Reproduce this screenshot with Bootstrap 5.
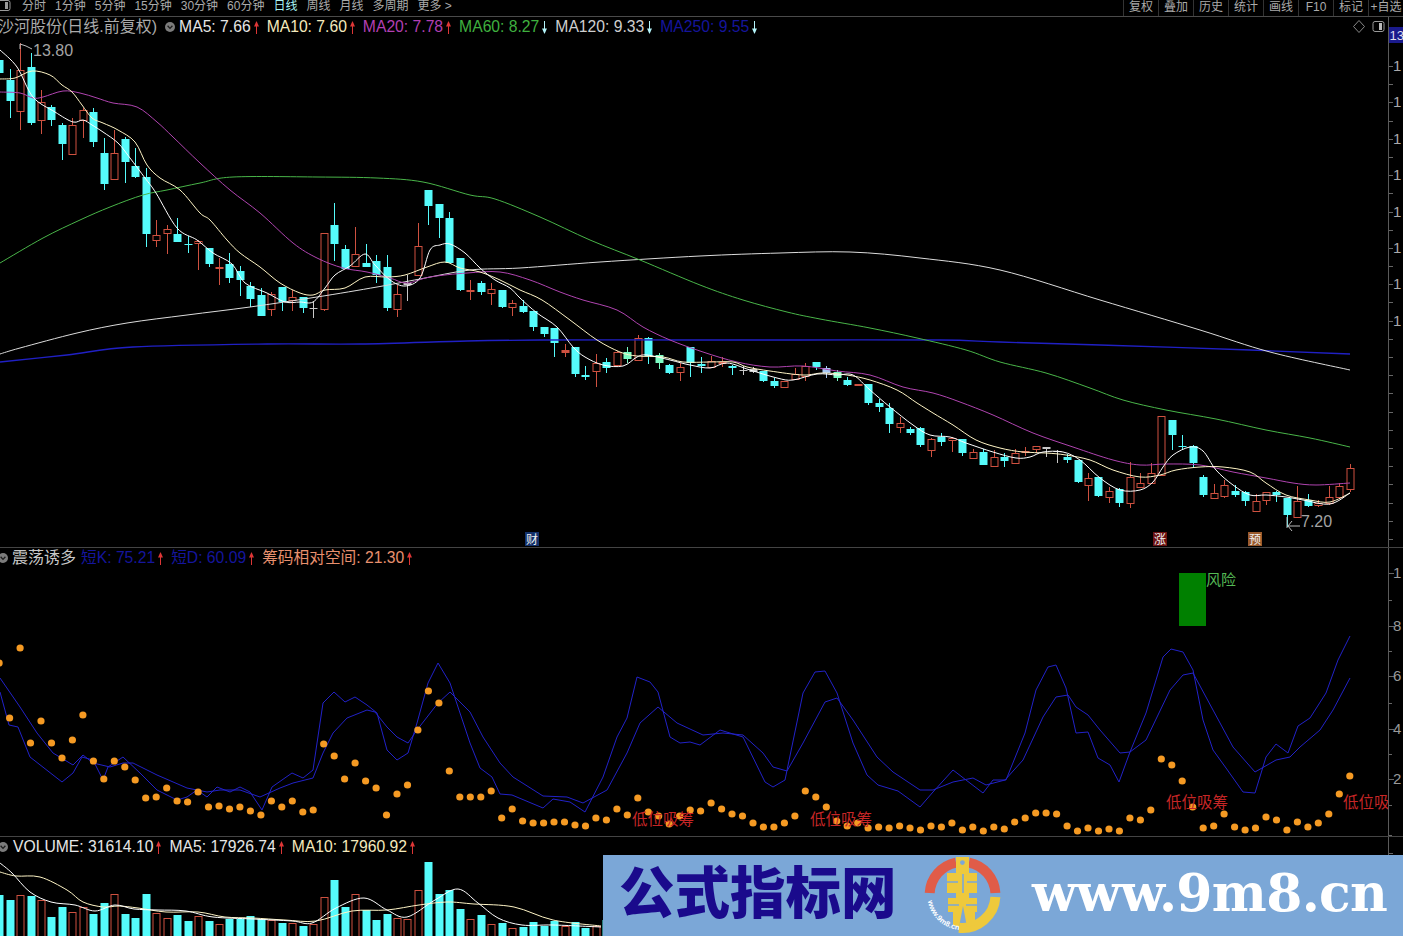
<!DOCTYPE html>
<html lang="zh-CN">
<head>
  <meta charset="UTF-8">
  <meta name="viewport" content="width=device-width, initial-scale=1.0">
  <title>沙河股份 日线</title>
  <link href="https://cdn.jsdelivr.net/npm/bootstrap@5.3.0/dist/css/bootstrap.min.css" rel="stylesheet">
  <style>
    body {
      background: #000;
      height: 936px;
      overflow: hidden;
      font-family: "Liberation Sans", "Noto Sans CJK SC", sans-serif;
    }
    .toolbar {
      height: 17px;
      border-bottom: 1px solid #4a4a4a;
      font-size: 12px;
      color: #aaa;
      line-height: 12px;
      overflow: hidden;
    }
    .period-list {
      margin-left: 22px;
      gap: 9px;
    }
    .period-on { color: #a8f4f4; }
    .tool-list button {
      width: 35px;
      height: 16px;
      padding: 0 0 3px;
      border: 0;
      border-left: 1px solid #333;
      background: none;
      color: #aaa;
      font-size: 12px;
      line-height: 12px;
      text-align: center;
      display: block;
    }
    .pane { border-bottom: 1px solid #444; }
    .pane-main { height: 531px; }
    .pane-osc { height: 289px; }
    .pane-vol { height: 99px; border-bottom: 0; }
    .plot { width: 1388px; }
    .plot svg, .scale svg { display: block; }
    .scale {
      width: 15px;
      border-left: 1px solid #5a5a5a;
      overflow: hidden;
    }
    .legend {
      z-index: 2;
      font-size: 15.7px;
      line-height: 20px;
      white-space: nowrap;
    }
    .leg-item { margin-right: 7px; }
    .leg-item svg { width: 7px; height: 15px; margin-left: 2px; }
    .fold-dot { width: 10px; height: 10px; flex: none; }
    .fold-left { margin-left: -2px; }
    .stock-name { font-size: 16px; margin-left: -2px; color: #aaa; }
    .osc-name { font-size: 16px; color: #c8c8c8; margin-right: 5px; }
    .vol-first { padding-left: 5px; }
    .c-white { color: #e6e6e6; }
    .c-yellow { color: #f4e9bc; }
    .c-purple { color: #b23fb2; }
    .c-green { color: #3fb03f; }
    .c-grey { color: #cfcfcf; }
    .c-blue { color: #15159c; }
    .c-salmon { color: #e8906e; }
    .arrow-up { color: #dd3636; }
    .arrow-down { color: #b4f4fa; }
    .site-banner {
      z-index: 3;
      left: 603px;
      top: 855px;
      width: 800px;
      height: 81px;
      background: #7ba7d7;
    }
    .site-name {
      width: 301px;
      padding-left: 16px;
      margin-top: -14px;
      color: #1a0a8c;
      font-family: "Noto Sans CJK SC", sans-serif;
      font-weight: 900;
      font-size: 55.5px;
      line-height: 70px;
      white-space: nowrap;
    }
    .site-logo { width: 78px; height: 78px; margin-left: 20px; flex: none; }
    .site-url {
      margin-left: 30px;
      margin-top: -6px;
      color: #fff;
      font-family: "DejaVu Serif", serif;
      font-weight: 700;
      font-size: 52px;
      line-height: 70px;
      letter-spacing: -0.7px;
      white-space: nowrap;
    }
  </style>
</head>
<body class="position-relative">
  <svg width="0" height="0" class="position-absolute">
    <symbol id="up" viewBox="0 0 7 15"><path d="M3.5 2V14" stroke="currentColor" fill="none"/><path d="M1 6.5 3.5 1 6 6.5Z" fill="currentColor"/></symbol>
    <symbol id="down" viewBox="0 0 7 15"><path d="M3.5 1V13" stroke="currentColor" fill="none"/><path d="M1 8.5 3.5 14 6 8.5Z" fill="currentColor"/></symbol>
    <symbol id="fold" viewBox="0 0 10 10"><circle cx="5" cy="5" r="5" fill="#7c7c7c"/><path d="M2.6 3.8 5 6.4 7.4 3.8" fill="none" stroke="#1c1c1c" stroke-width="1.3"/></symbol>
  </svg>

  <nav class="toolbar d-flex position-relative">
    <svg class="position-absolute top-0 start-0" width="12" height="12"><rect x="-2" y="0.5" width="12" height="10" rx="2" fill="none" stroke="#999"/><rect x="5" y="2" width="3" height="7" fill="#999"/></svg>
    <div class="period-list d-flex">
      <span>分时</span><span>1分钟</span><span>5分钟</span><span>15分钟</span><span>30分钟</span><span>60分钟</span>
      <span class="period-on">日线</span><span>周线</span><span>月线</span><span>多周期</span><span>更多 &gt;</span>
    </div>
    <div class="tool-list d-flex ms-auto">
      <button type="button">复权</button><button type="button">叠加</button><button type="button">历史</button><button type="button">统计</button>
      <button type="button">画线</button><button type="button">F10</button><button type="button">标记</button><button type="button">+自选</button>
    </div>
  </nav>

  <section class="pane pane-main d-flex">
    <div class="plot position-relative">
      <div class="legend position-absolute top-0 start-0 d-flex align-items-center">
        <span class="stock-name">沙河股份(日线.前复权)</span>
        <svg class="fold-dot ms-2 me-1"><use href="#fold"/></svg>
        <span class="leg-item c-white d-flex align-items-center">MA5: 7.66<svg class="arrow-up"><use href="#up"/></svg></span>
        <span class="leg-item c-yellow d-flex align-items-center">MA10: 7.60<svg class="arrow-up"><use href="#up"/></svg></span>
        <span class="leg-item c-purple d-flex align-items-center">MA20: 7.78<svg class="arrow-up"><use href="#up"/></svg></span>
        <span class="leg-item c-green d-flex align-items-center">MA60: 8.27<svg class="arrow-down"><use href="#down"/></svg></span>
        <span class="leg-item c-grey d-flex align-items-center">MA120: 9.33<svg class="arrow-down"><use href="#down"/></svg></span>
        <span class="leg-item c-blue d-flex align-items-center">MA250: 9.55<svg class="arrow-down"><use href="#down"/></svg></span>
      </div>
      <div id="mainPlot"></div>
    </div>
    <div class="scale" id="mainScale"></div>
  </section>

  <section class="pane pane-osc d-flex">
    <div class="plot position-relative">
      <div class="legend position-absolute top-0 start-0 d-flex align-items-center">
        <svg class="fold-dot fold-left"><use href="#fold"/></svg>
        <span class="osc-name ps-1">震荡诱多</span>
        <span class="leg-item c-blue d-flex align-items-center">短K: 75.21<svg class="arrow-up"><use href="#up"/></svg></span>
        <span class="leg-item c-blue d-flex align-items-center">短D: 60.09<svg class="arrow-up"><use href="#up"/></svg></span>
        <span class="leg-item c-salmon d-flex align-items-center">筹码相对空间: 21.30<svg class="arrow-up"><use href="#up"/></svg></span>
      </div>
      <div id="oscPlot"></div>
    </div>
    <div class="scale" id="oscScale"></div>
  </section>

  <section class="pane pane-vol d-flex">
    <div class="plot position-relative">
      <div class="legend position-absolute top-0 start-0 d-flex align-items-center">
        <svg class="fold-dot fold-left"><use href="#fold"/></svg>
        <span class="leg-item vol-first c-white d-flex align-items-center">VOLUME: 31614.10<svg class="arrow-up"><use href="#up"/></svg></span>
        <span class="leg-item c-white d-flex align-items-center">MA5: 17926.74<svg class="arrow-up"><use href="#up"/></svg></span>
        <span class="leg-item c-yellow d-flex align-items-center">MA10: 17960.92<svg class="arrow-up"><use href="#up"/></svg></span>
      </div>
      <div id="volPlot"></div>
    </div>
    <div class="scale" id="volScale"></div>
  </section>

  <aside class="site-banner position-absolute d-flex align-items-center">
    <div class="site-name">公式指标网</div>
    <svg class="site-logo" viewBox="925 857 78 78">
      <g fill="none" stroke-width="10">
        <path d="M930.7 893A33 33 0 0 1 957 862.6" stroke="#e05c48"/>
        <path d="M970 862.6A33 33 0 0 1 996.4 893" stroke="#e05c48"/>
        <path d="M996.4 897A33 33 0 0 1 960 927.8" stroke="#eec93c"/>
      </g>
      <path fill="#eec93c" d="M957 857H970V873H978V893H970V898H978V912H976V925L968 927 964 906 960 927 954 925V912H949V898H957V893H948V873H957Z"/>
      <circle cx="963.4" cy="862.6" r="2.4" fill="#7ba7d7"/>
      <path d="M948 882H959M968 882H978M964 874V893M949 905H960M967 905H978" stroke="#7ba7d7" stroke-width="1.6"/>
      <path id="logoArc" d="M929 901A35 35 0 0 0 961 930" fill="none"/>
      <text font-size="7.5" font-weight="700" fill="#fff" font-family="Liberation Sans, sans-serif"><textPath href="#logoArc">www.9m8.cn</textPath></text>
    </svg>
    <div class="site-url">www.9m8.cn</div>
  </aside>

  <script>
    const candleX = (i) => 9.6 + 10.47 * i;
    const RED = '#cf5140';
    const CYAN = '#55fbfb';

    // body top, body bottom, wick top, wick bottom, kind (first entry is index -1)
    const candles = [
      [60,73,57,75,'c'],[80,101,69,118,'c'],[70,111,43,130,'r'],[67,123,53,125,'c'],[102,120,90,134,'r'],[107,120,105,126,'c'],
      [125,144,123,160,'c'],[125,154,118,155,'r'],[110,120,108,138,'r'],[112,142,108,147,'c'],[153,184,138,190,'c'],[153,179,130,180,'r'],
      [139,162,137,183,'c'],[166,177,148,178,'c'],[177,234,168,247,'c'],[235,240,220,247,'r'],[229,233,225,254,'r'],[234,242,218,242,'c'],
      [244,245,236,253,'c'],[241,243,240,270,'r'],[248,264,248,267,'c'],[267,269,258,285,'x'],[264,278,253,283,'c'],[271,280,266,296,'c'],
      [286,299,282,307,'c'],[295,316,288,316,'c'],[294,309,292,316,'r'],[287,302,287,311,'c'],[297,300,290,311,'r'],[297,308,297,313,'c'],
      [308,309,302,318,'g'],[233,309,233,311,'r'],[225,244,203,261,'c'],[249,269,245,269,'c'],[254,266,227,267,'r'],[263,267,244,267,'c'],
      [261,275,255,283,'c'],[267,308,255,311,'c'],[294,309,285,317,'r'],[283,285,275,301,'g'],[246,275,223,276,'r'],[190,206,190,225,'c'],
      [204,218,204,238,'c'],[218,263,212,263,'c'],[258,290,258,291,'c'],[290,292,280,300,'x'],[283,292,281,295,'c'],[289,293,283,305,'r'],
      [290,307,290,308,'c'],[303,307,300,316,'r'],[306,312,300,313,'c'],[311,327,311,331,'c'],[327,334,327,337,'c'],[328,343,328,357,'c'],
      [350,353,344,357,'x'],[347,374,347,377,'c'],[375,377,366,380,'c'],[363,371,354,387,'r'],[362,368,358,373,'c'],[352,365,351,366,'r'],
      [352,359,347,363,'t'],[338,360,335,360,'r'],[338,356,337,364,'c'],[355,363,353,369,'t'],[365,373,364,374,'c'],[367,372,363,381,'r'],
      [347,363,347,377,'c'],[364,366,357,373,'c'],[361,367,356,368,'r'],[362,363,357,367,'r'],[366,368,365,375,'c'],[370,371,366,375,'g'],
      [369,372,367,373,'g'],[371,381,371,382,'c'],[381,386,378,388,'c'],[381,387,381,387,'r'],[374,379,368,380,'r'],[366,376,363,381,'r'],
      [362,367,362,370,'c'],[368,373,366,378,'l'],[372,378,370,381,'t'],[380,385,377,386,'c'],[384,386,384,386,'x'],[384,403,384,405,'c'],
      [403,407,399,412,'c'],[408,424,403,433,'c'],[423,427,417,433,'r'],[429,433,427,435,'c'],[428,445,427,447,'c'],[439,450,438,457,'r'],
      [437,442,433,446,'c'],[438,440,437,452,'r'],[439,453,439,456,'c'],[452,458,449,458,'r'],[452,465,449,465,'c'],[457,466,450,467,'r'],
      [457,461,453,467,'c'],[453,463,449,463,'r'],[451,453,447,456,'x'],[446,449,446,453,'r'],[447,449,447,457,'g'],[451,452,450,463,'g'],
      [457,460,454,463,'c'],[460,482,460,483,'c'],[478,485,473,501,'r'],[477,496,477,497,'c'],[491,497,487,503,'r'],[489,503,488,507,'c'],
      [477,503,462,508,'r'],[483,487,473,488,'r'],[473,483,463,483,'r'],[416,475,416,475,'r'],[420,435,420,450,'c'],[446,447,435,449,'c'],
      [446,463,445,468,'c'],[477,495,475,497,'c'],[493,498,484,498,'r'],[485,496,480,498,'r'],[491,495,485,497,'c'],[492,501,491,506,'c'],
      [501,511,494,511,'r'],[492,500,492,505,'r'],[492,495,491,502,'c'],[498,515,498,527,'c'],[501,517,486,518,'r'],[500,506,494,507,'c'],
      [503,505,500,507,'r'],[497,503,486,505,'r'],[486,497,483,497,'r'],[468,489,464,492,'r']
    ];

    const lines = {
      ma5: '0,50 17,67 33,97 55,112 73,122 83,120 92,125 103,132 118,143 130,158 145,178 156,193 177,228 197,240 213,253 232,264 245,283 267,293 285,302 300,302 313,302 325,288 335,275 350,266 365,254 375,265 390,280 405,286 420,278 430,250 440,245 450,244 465,253 480,268 495,280 510,288 520,298 537,313 557,327 573,347 585,357 603,365 623,366 637,357 647,355 670,360 690,365 710,368 727,363 750,370 777,378 793,380 817,374 837,375 853,375 870,390 890,407 913,425 930,435 950,437 966,443 993,452 1016,458 1030,457 1043,452 1063,452 1080,460 1100,478 1120,490 1140,490 1153,482 1163,467 1173,455 1190,447 1203,451 1216,470 1233,485 1250,495 1266,495 1286,497 1303,500 1330,504 1350,493',
      ma10: '0,79 15,78 32,71 50,75 62,85 72,92 82,105 92,118 103,123 118,130 135,142 147,165 160,178 180,190 200,213 210,220 227,240 240,253 260,267 280,283 300,293 313,295 325,290 345,288 365,277 387,277 405,275 427,267 445,262 460,268 480,272 500,280 520,290 542,300 570,320 597,340 620,352 637,356 663,357 683,362 710,362 733,362 747,367 770,371 803,375 823,373 847,375 870,380 897,390 917,403 933,413 953,425 976,440 1000,448 1023,452 1046,453 1066,455 1090,460 1113,470 1140,477 1160,475 1176,470 1200,467 1223,467 1250,472 1266,483 1286,495 1310,500 1330,502 1350,493',
      ma20: '0,92 20,93 33,98 43,97 63,91 80,93 97,98 113,103 137,107 157,122 173,137 200,163 230,190 260,213 293,243 317,258 343,268 367,272 390,278 407,283 430,277 467,273 500,272 530,280 560,292 583,300 617,310 643,327 670,340 703,352 737,362 770,367 803,366 837,371 870,375 903,387 933,393 960,402 993,415 1033,433 1073,447 1113,460 1140,465 1166,464 1200,465 1233,472 1266,478 1293,483 1316,485 1350,483',
      ma60: '0,263 43,238 80,220 110,207 143,195 167,190 200,183 233,177 317,177 377,178 423,182 470,195 495,199 540,217 590,240 640,260 700,285 743,300 787,312 820,319 870,328 917,338 966,350 1000,362 1046,373 1090,388 1123,400 1166,410 1216,419 1266,430 1310,438 1350,447',
      ma120: '0,354 20,348 77,333 127,323 187,315 250,307 317,297 377,287 420,279 470,270 520,268 600,262 700,256 780,253 850,252 920,258 1000,270 1100,300 1200,330 1270,352 1350,370',
      ma250: '0,362 67,355 133,347 267,344 360,344 467,341 540,340 690,340 800,340 940,340 1000,342 1100,345 1250,350 1350,354',
      k: '0,692 9,725 18,727 30,757 62,782 73,773 82,757 93,760 103,780 108,767 123,757 140,773 157,790 177,800 187,797 197,790 207,797 217,787 230,792 240,787 250,792 262,810 272,787 292,773 303,778 313,770 323,703 334,692 345,702 355,697 367,705 377,713 387,750 397,760 408,753 417,723 428,683 438,663 450,683 470,743 480,768 492,777 500,794 512,795 543,808 553,799 570,802 585,812 603,777 617,737 627,718 637,677 650,682 658,692 670,737 680,743 690,742 700,745 720,730 743,737 765,782 773,787 785,780 803,693 815,672 825,671 837,693 853,743 867,775 878,785 898,791 920,807 933,792 953,770 966,780 983,793 993,780 1006,780 1025,733 1036,690 1048,667 1056,665 1066,688 1076,733 1088,732 1098,758 1110,765 1119,782 1130,752 1146,713 1163,657 1171,649 1183,652 1193,670 1203,720 1213,750 1226,768 1243,792 1255,793 1266,757 1276,744 1288,753 1298,726 1310,718 1326,693 1338,660 1350,636',
      d: '0,678 20,707 37,733 53,753 73,765 83,755 93,763 110,767 123,763 133,763 157,775 187,788 207,792 220,790 240,790 260,797 280,788 293,783 313,778 323,753 333,733 347,718 367,710 375,712 387,727 397,737 408,743 417,730 438,703 450,692 470,712 483,737 500,763 513,777 543,796 567,797 583,803 607,790 627,753 640,723 658,707 677,723 703,735 723,733 743,735 763,753 773,767 787,771 803,743 825,702 837,698 853,720 877,757 893,772 920,790 933,790 953,782 973,778 986,785 1005,780 1023,760 1043,717 1056,697 1068,695 1076,707 1088,715 1100,730 1120,753 1130,752 1146,740 1170,690 1183,675 1193,673 1213,710 1233,747 1255,772 1276,760 1290,757 1300,747 1320,730 1333,710 1350,678',
      volMa5: '0,863 12,873 30,892 51,902 75,905 95,911 115,905 134,909 158,910 186,911 213,917 253,919 292,921 312,923 336,908 364,898 387,910 407,917 435,900 458,889 478,903 498,918 522,925 553,925 601,927',
      volMa10: '0,872 16,876 40,877 67,890 83,902 103,907 119,906 138,908 166,912 198,912 225,917 253,918 285,920 316,921 352,911 387,910 419,905 447,902 474,904 514,907 553,920 601,926'
    };

    // first entry is index -1
    const dots = [663,718,648,743,721,743,758,740,715,761,779,761,767,780,798,797,788,801,802,792,807,806,809,807,811,815,801,807,801,812,810,744,756,779,763,781,788,815,794,785,730,691,703,771,797,797,797,791,818,809,821,823,823,822,822,825,826,818,820,809,815,798,812,816,824,816,810,811,803,809,814,816,823,827,827,823,816,791,797,807,821,826,823,828,827,828,826,828,830,826,827,823,830,827,831,827,829,822,818,813,813,814,826,831,828,831,829,831,818,820,810,759,765,781,807,828,826,814,827,830,828,817,820,830,822,827,823,814,794,776];

    // top of each volume bar, index -1 to 57, then hidden by the banner
    const vols = [[895,'c'],[900,'c'],[895,'r'],[896,'c'],[900,'r'],[917,'c'],[907,'c'],[912,'r'],[907,'r'],[914,'c'],[903,'c'],[894,'r'],[914,'c'],[918,'c'],[894,'c'],[913,'r'],[918,'r'],[915,'c'],[921,'c'],[916,'r'],[921,'c'],[924,'r'],[919,'c'],[919,'c'],[916,'c'],[919,'c'],[920,'r'],[923,'c'],[923,'r'],[926,'c'],[924,'r'],[897,'r'],[880,'c'],[907,'c'],[894,'r'],[910,'c'],[920,'c'],[914,'c'],[918,'r'],[919,'r'],[890,'r'],[862,'c'],[894,'c'],[890,'c'],[909,'c'],[919,'r'],[915,'c'],[924,'r'],[923,'c'],[928,'r'],[927,'c'],[922,'c'],[926,'c'],[921,'c'],[926,'r'],[922,'c'],[928,'c'],[926,'r'],[920,'c']];

    const poly = (pts, color) => `<polyline points="${pts}" fill="none" stroke="${color}" stroke-linejoin="round"/>`;
    const snap = (v) => Math.round(v) + 0.5;

    // moving averages are curved in the reference, so run them through a Catmull-Rom spline
    function smooth(pts, color, width = 1) {
      const p = pts.split(' ').map((s) => s.split(',').map(Number));
      let d = `M${p[0][0]} ${p[0][1]}`;
      for (let i = 0; i < p.length - 1; i++) {
        const a = p[Math.max(i - 1, 0)], b = p[i], c = p[i + 1], e = p[Math.min(i + 2, p.length - 1)];
        const c1 = [b[0] + (c[0] - a[0]) / 6, b[1] + (c[1] - a[1]) / 6];
        const c2 = [c[0] - (e[0] - b[0]) / 6, c[1] - (e[1] - b[1]) / 6];
        d += `C${c1[0].toFixed(1)} ${c1[1].toFixed(1)} ${c2[0].toFixed(1)} ${c2[1].toFixed(1)} ${c[0]} ${c[1]}`;
      }
      return `<path d="${d}" fill="none" stroke="${color}" stroke-width="${width}"/>`;
    }

    function candleSvg(c, i) {
      const x = snap(candleX(i - 1));
      const [top, bot, hi, lo, kind] = c;
      if (kind === 'r' || kind === 'x') {
        let s = `<path d="M${x} ${hi}V${top}M${x} ${bot}V${lo}" stroke="${RED}"/>`;
        if (kind === 'x') return s + `<rect x="${x - 4}" y="${top}" width="8" height="${bot - top}" fill="${RED}"/>`;
        return s + `<rect x="${x - 3.5}" y="${top + 0.5}" width="7" height="${bot - top}" fill="#000" stroke="${RED}"/>`;
      }
      const fill = { c: CYAN, t: '#7dfcc4', l: '#a6c8f4', g: '#c8c8c8' }[kind];
      return `<path d="M${x} ${hi}V${lo}" stroke="${fill}"/><rect x="${x - 4}" y="${top}" width="8" height="${Math.max(bot - top, 1)}" fill="${fill}"/>`;
    }

    function badge(x, label, bg) {
      return `<rect x="${x - 7}" y="532" width="14" height="14" fill="${bg}"/><text x="${x}" y="544" font-size="12" text-anchor="middle" fill="#eee">${label}</text>`;
    }

    function canvas(id, x, y, w, h, body) {
      document.getElementById(id).innerHTML =
        `<svg width="${w}" height="${h}" viewBox="${x} ${y} ${w} ${h}" font-family="Liberation Sans, Noto Sans CJK SC, sans-serif">${body}</svg>`;
    }

    // price pane
    let main = candles.map(candleSvg).join('');
    main += smooth(lines.ma250, '#2020c4', 1.3) + smooth(lines.ma120, '#dcdcdc') + smooth(lines.ma60, '#49b549') + smooth(lines.ma20, '#b044b0');
    main += smooth(lines.ma10, '#fff5c6') + smooth(lines.ma5, '#ffffff');
    main += `<path d="M20 44V49M20 44 26 46 32 49" stroke="#bbb" fill="none"/><text x="33" y="56" font-size="16" fill="#a4a4a4">13.80</text>`;
    main += `<path d="M1287 517V528M1292 521 1288 526 1292 531M1288 526H1300" stroke="#bbb" fill="none"/><text x="1301" y="527" font-size="16" fill="#a4a4a4">7.20</text>`;
    main += badge(532, '财', '#12306a') + badge(1160, '涨', '#6b1212') + badge(1255, '预', '#9a5a2c');
    main += `<path d="M1359 20.5 1364.5 26.5 1359 32.5 1353.5 26.5Z" fill="none" stroke="#888"/><rect x="1373" y="21.5" width="11" height="10" rx="2" fill="none" stroke="#999"/><rect x="1379" y="23" width="3" height="7" fill="#bbb"/>`;
    canvas('mainPlot', 0, 17, 1388, 530, main);

    let mainAxis = `<rect x="1389" y="27" width="14" height="16" fill="#1a1a8c"/><text x="1389.5" y="40" font-size="13" fill="#dde">13</text>`;
    for (let k = 0; k <= 26; k++) {
      const y = 66 + 18.19 * k;
      mainAxis += `<path d="M1389 ${snap(y)}H1393" stroke="#666"/>`;
      if (k % 2 === 0 && k <= 14) mainAxis += `<text x="1393" y="${y + 5}" font-size="15" fill="#aaa">1</text>`;
    }
    canvas('mainScale', 1389, 17, 14, 530, mainAxis);

    // oscillator pane
    let osc = `<rect x="1179" y="573" width="27" height="53" fill="#008000"/><text x="1206" y="585" font-size="15" fill="#55bb55">风险</text>`;
    osc += poly(lines.k, '#2222c8') + poly(lines.d, '#2222c8');
    osc += dots.map((y, i) => `<circle cx="${candleX(i - 1).toFixed(1)}" cy="${y}" r="3.6" fill="#f59a23"/>`).join('');
    [[632, 825, '低位吸筹'], [810, 825, '低位吸筹'], [1166, 808, '低位吸筹'], [1343, 808, '低位吸']].forEach(([x, y, t]) => {
      osc += `<text x="${x}" y="${y}" font-size="15.5" fill="#c62626">${t}</text>`;
    });
    canvas('oscPlot', 0, 548, 1388, 288, osc);

    let oscAxis = '';
    [[573, '1'], [626, '8'], [676, '6'], [729, '4'], [779, '2']].forEach(([y, t]) => {
      oscAxis += `<path d="M1389 ${y + 0.5}H1394" stroke="#666"/><text x="1393" y="${y + 5}" font-size="15" fill="#999">${t}</text>`;
    });
    [600, 651, 703, 754, 805, 835].forEach((y) => { oscAxis += `<path d="M1389 ${y + 0.5}H1392" stroke="#666"/>`; });
    canvas('oscScale', 1389, 548, 14, 288, oscAxis);

    // volume pane
    let vol = vols.map(([top, kind], i) => {
      const x = snap(candleX(i - 1));
      if (kind === 'c') return `<rect x="${x - 4}" y="${top}" width="8" height="${936 - top}" fill="${CYAN}"/>`;
      return `<rect x="${x - 3.5}" y="${top + 0.5}" width="7" height="${940 - top}" fill="#000" stroke="${RED}"/>`;
    }).join('');
    vol += smooth(lines.volMa10, '#fff5c6') + smooth(lines.volMa5, '#ffffff');
    canvas('volPlot', 0, 837, 1388, 99, vol);
    canvas('volScale', 1389, 837, 14, 99, '<path d="M1389 853.5H1393" stroke="#666"/>');
  </script>
  <script src="https://cdn.jsdelivr.net/npm/bootstrap@5.3.0/dist/js/bootstrap.bundle.min.js"></script>
</body>
</html>
